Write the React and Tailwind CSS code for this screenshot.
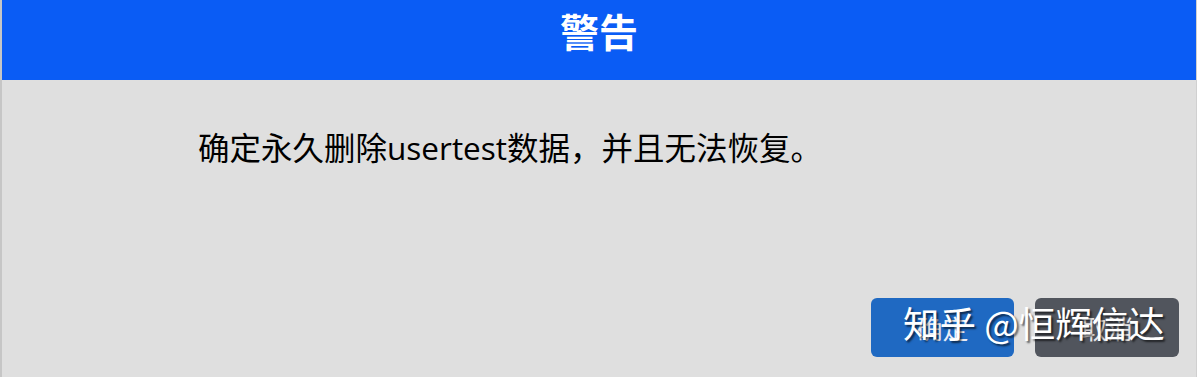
import React from "react";

const cjk = { fontFamily: '"Noto Sans CJK SC", "Liberation Sans", sans-serif' };

export default function App() {
  return (
    <div className="relative w-[1197px] h-[377px] overflow-hidden bg-[#dfdfdf] border-l-2 border-[#c6c6c6] border-r border-r-[#d0d0d0]" style={cjk}>
      {/* Header */}
      <div className="h-[80px] bg-[#0a5cf5] flex justify-center pt-[2px]">
        <h1 className="text-[39px] font-bold text-white leading-[56px]">警告</h1>
      </div>

      {/* Body */}
      <div className="pl-[196px] pt-[48px] h-[218px]">
        <p className="text-[31.5px] leading-[40px] text-black" style={{ fontFamily: '"Open Sans", "Noto Sans CJK SC", sans-serif' }}>
          确定永久删除usertest数据，并且无法恢复。
        </p>
      </div>

      {/* Buttons */}
      <div className="flex justify-end gap-[21px] pr-[17px]">
        <button className="w-[143px] h-[59px] rounded-[6px] bg-[#1f69c2] text-[#e8eef8] text-[26px]">确定</button>
        <button className="w-[144px] h-[59px] rounded-[6px] bg-[#51555d] text-[#e6e6e8] text-[26px]">取消</button>
      </div>

      {/* Watermark */}
      <div
        className="absolute left-[901px] top-[298px] text-[36.5px] leading-[50px] text-white whitespace-nowrap"
        style={{ textShadow: "2px 2px 2px rgba(0,0,0,0.6)" }}
      >
        知乎 @恒辉信达
      </div>
    </div>
  );
}
